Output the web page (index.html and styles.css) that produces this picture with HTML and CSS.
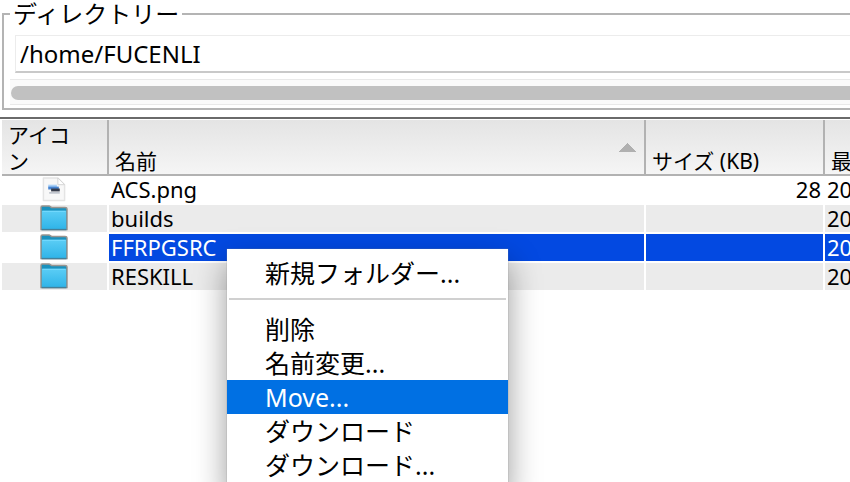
FILE: index.html
```html
<!DOCTYPE html>
<html lang="ja">
<head>
<meta charset="utf-8">
<title>ディレクトリー</title>
<link rel="stylesheet" href="styles.css">
</head>
<body>
<svg class="defs" aria-hidden="true">
  <defs>
    <linearGradient id="face" x1="0" y1="0" x2="0" y2="1">
      <stop offset="0" stop-color="#5bcdf5"/>
      <stop offset="1" stop-color="#2fb4e8"/>
    </linearGradient>
    <symbol id="folder" viewBox="0 0 30 28">
      <path d="M1.500 2.500Q1.500 1 3 1H10l2.500 1.500H26.500Q28.500 2.500 28.500 4V25.500H1.500Z" fill="#1b91bd" stroke="#9a9590" stroke-width="1.500"/>
      <path d="M2.500 6H27.500V25H2.500Z" fill="url(#face)"/>
      <path d="M3 6.500H27" stroke="#7bdcff"/>
      <path d="M2 25.500H28" stroke="#457f98" stroke-width="1.500"/>
    </symbol>
    <symbol id="image-file" viewBox="0 0 30 28">
      <path d="M4 2H19L26 9V25.500H4Z" fill="#f8f8f8" stroke="#e4e4e4" stroke-width="1.500" stroke-linejoin="round"/>
      <path d="M19 2V9H26Z" fill="#fff" stroke="#d4d4d4"/>
      <path d="M9 9H18V12H9Z" fill="#a9d0f7"/>
      <path d="M9 11H20V14H9Z" fill="#4784d1"/>
      <path d="M12 13H21V16H12Z" fill="#363c4b"/>
      <path d="M10 17.500H21" stroke="#b7bdc7" stroke-width="1.500"/>
    </symbol>
  </defs>
</svg>
<fieldset class="directory">
  <legend><label for="path">ディレクトリー</label></legend>
  <input id="path" class="path" type="text" value="/home/FUCENLI">
  <div class="track"><div class="thumb"></div></div>
</fieldset>
<main class="files">
  <table>
    <colgroup><col class="c-icon"><col><col class="c-size"><col class="c-date"></colgroup>
    <thead>
      <tr><th class="wrapped">アイコン</th><th class="sorted">名前</th><th>サイズ (KB)</th><th>最</th></tr>
    </thead>
    <tbody>
      <tr><td class="icon"><svg><use href="#image-file"/></svg></td><td>ACS.png</td><td class="size">28</td><td>20</td></tr>
      <tr><td class="icon"><svg><use href="#folder"/></svg></td><td>builds</td><td></td><td>20</td></tr>
      <tr class="selected"><td class="icon"><svg><use href="#folder"/></svg></td><td>FFRPGSRC</td><td></td><td>20</td></tr>
      <tr><td class="icon"><svg><use href="#folder"/></svg></td><td>RESKILL</td><td></td><td>20</td></tr>
    </tbody>
  </table>
</main>
<div class="menu" role="menu">
  <button role="menuitem">新規フォルダー...</button>
  <hr>
  <button role="menuitem">削除</button>
  <button role="menuitem">名前変更...</button>
  <button role="menuitem" class="active">Move...</button>
  <button role="menuitem">ダウンロード</button>
  <button role="menuitem">ダウンロード...</button>
</div>
</body>
</html>
```

FILE: styles.css
```css
* { box-sizing: border-box; }
html { height: 100%; overflow: hidden; }
body {
  margin: 0;
  height: 100%;
  overflow: hidden;
  background: #fff;
  color: #000;
  font: 22px/28px "Noto Sans", "Noto Sans CJK JP", sans-serif;
}
.defs { position: absolute; width: 0; height: 0; }

.directory {
  margin: 0 -4px 7px 2px;
  padding: 7px 0 3px 6px;
  border: 2px solid #b4b4b4;
  min-width: 0;
}
.directory legend {
  padding: 0 3px;
  font-size: 24px;
  line-height: 28px;
}
.path {
  display: block;
  width: calc(100% - 5px);
  height: 38px;
  margin: 0 0 6px 5px;
  padding: 0 4px;
  border: 1px solid #ececec;
  border-bottom: 2px solid #c9c9c9;
  outline: 0;
  background: #fff;
  color: #000;
  font: inherit;
  font-size: 24px;
}
.track {
  padding: 6px 0 4px 1px;
  border: 1px solid #e9e9e9;
  border-width: 1px 0;
  background: #fafafa;
}
.thumb { height: 14px; border-radius: 7px 0 0 7px; background: #c1c1c1; }

.files { border-top: 2px solid #6a6a6a; padding: 1px 0 0 2px; }
table { width: 100%; table-layout: fixed; border-spacing: 0; }
.c-icon { width: 107px; }
.c-size { width: 179px; }
.c-date { width: 25px; }
th {
  height: 56px;
  padding: 2px 6px 0;
  border-right: 2px solid #b2b2b2;
  border-bottom: 2px solid #b2b2b2;
  background: linear-gradient(#e4e4e4, #f5f5f5);
  font-size: 21px;
  font-weight: 400;
  line-height: 26px;
  text-align: left;
  vertical-align: bottom;
  word-break: break-all;
}
th:last-child, td:last-child { border-right: 0; overflow: hidden; white-space: nowrap; }
th:last-child { padding-right: 0; }
.wrapped { padding-right: 28px; }
.sorted {
  background:
    conic-gradient(from 135deg at 50% 0, #b0b0b0 90deg, transparent 0) right 8px top 23px / 18px 9px no-repeat,
    linear-gradient(#e4e4e4, #f5f5f5);
}
td {
  height: 29px;
  padding: 0 2px;
  border-right: 2px solid #fff;
  border-bottom: 2px solid #fff;
  line-height: 27px;
}
tbody tr:nth-child(even) { background: #ebebeb; }
.selected td:not(.icon) { background: #0349e1; color: #fff; }
.size { text-align: right; }
.icon { padding: 0 2px 0 0; text-align: center; line-height: 0; }
.icon svg { width: 30px; height: 27px; }

.menu {
  position: absolute;
  top: 249px;
  left: 227px;
  width: 281px;
  padding: 7px 0;
  background: #fff;
  box-shadow: 0 0 1px #888, 0 14px 30px rgba(0, 0, 0, .4);
}
.menu button {
  display: block;
  width: 100%;
  height: 34px;
  padding: 0 38px;
  border: 0;
  background: none;
  color: #000;
  font: inherit;
  font-size: 25px;
  line-height: 34px;
  text-align: left;
  white-space: nowrap;
}
.menu .active { background: #0070e3; color: #fff; }
.menu hr { height: 2px; margin: 8px 2px 12px; border: 0; background: #d0d0d0; }
```
